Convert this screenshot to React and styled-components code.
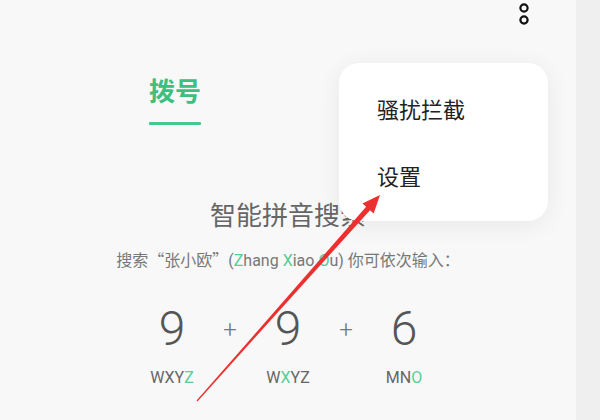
import React from "react";
import styled, { createGlobalStyle } from "styled-components";

const GlobalStyle = createGlobalStyle`
  html, body {
    margin: 0;
    padding: 0;
  }
  body {
    font-family: Roboto, "Noto Sans CJK SC", sans-serif;
    background: #f8f8f8;
  }
  * {
    box-sizing: border-box;
  }
`;

const SPage = styled.div`
  width: 600px;
  height: 420px;
  display: flex;
  position: relative;
  overflow: hidden;
`;

const SMain = styled.div`
  flex: 1;
  position: relative;
  background: #f8f8f8;
  display: flex;
  flex-direction: column;
`;

const SSideStrip = styled.div`
  width: 24px;
  background: #efefef;
`;

const STopBar = styled.div`
  height: 34px;
  display: flex;
  justify-content: flex-end;
  align-items: center;
  padding-right: 46px;
`;

const STabRow = styled.div`
  margin-top: 40px;
  padding-left: 149px;
  display: flex;
`;

const STab = styled.div`
  display: flex;
  flex-direction: column;
  align-items: stretch;
  color: #3dbf80;
  font-family: "Noto Sans CJK SC", sans-serif;
  font-weight: 700;
  font-size: 26px;
  line-height: 31px;

  &::after {
    content: "";
    height: 3px;
    margin-top: 17px;
    background: #46c88c;
    border-radius: 1px;
  }
`;

const SContent = styled.div`
  display: flex;
  flex-direction: column;
  align-items: center;
  margin-top: 74px;
`;

const STitle = styled.div`
  font-family: "Noto Sans CJK SC", sans-serif;
  font-size: 26px;
  line-height: 30px;
  color: #666666;
`;

const SDesc = styled.div`
  margin-top: 19px;
  font-family: Roboto, "Noto Sans CJK SC", sans-serif;
  font-size: 16px;
  line-height: 22px;
  color: #777777;
  white-space: nowrap;
`;

// full-width punctuation comes from the CJK face
const SCjk = styled.span`
  font-family: "Noto Sans CJK SC", sans-serif;
`;

const SHi = styled.span`
  color: ${(p) => (p.$light ? "#52cf98" : "#3dbf80")};
`;

const SKeys = styled.div`
  margin-top: 29px;
  display: grid;
  grid-template-columns: 80px 36px 80px 36px 80px;
  grid-template-rows: 56px 20px;
  row-gap: 11px;
  justify-items: center;
  align-items: center;
`;

const SDigit = styled.div`
  font-family: Roboto, sans-serif;
  font-weight: 300;
  font-size: 48px;
  line-height: 56px;
  color: #555555;
`;

const SPlus = styled.div`
  font-family: Roboto, sans-serif;
  font-weight: 300;
  font-size: 24px;
  line-height: 24px;
  color: #777777;
  margin-top: 2px;
`;

const SLetters = styled.div`
  font-family: Roboto, sans-serif;
  font-size: 16px;
  line-height: 20px;
  color: #666666;
`;

const SMenu = styled.div`
  position: absolute;
  top: 63px;
  right: 28px;
  width: 209px;
  padding: 11px 0 13px;
  background: #ffffff;
  border-radius: 20px;
  box-shadow: 0 4px 24px rgba(0, 0, 0, 0.07);
  z-index: 2;
`;

const SMenuItem = styled.div`
  height: 67px;
  display: flex;
  align-items: center;
  padding-left: 38px;
  font-family: "Noto Sans CJK SC", sans-serif;
  font-size: 22px;
  color: #222222;
`;

const SArrow = styled.svg`
  position: absolute;
  left: 0;
  top: 0;
  width: 600px;
  height: 420px;
  pointer-events: none;
  z-index: 3;
`;

const MoreIcon = () => (
  <svg width="12" height="28" viewBox="0 0 12 28">
    <circle cx="6" cy="5" r="3.6" fill="none" stroke="#111" strokeWidth="2.2" />
    <circle cx="6" cy="17" r="3.6" fill="none" stroke="#111" strokeWidth="2.2" />
  </svg>
);

const keys = [
  { digit: "9", letters: ["WXY", "Z", ""] },
  { digit: "9", letters: ["W", "X", "YZ"] },
  { digit: "6", letters: ["MN", "O", ""] },
];

const App = () => {
  return (
    <SPage>
      <GlobalStyle />
      <SMain>
        <STopBar>
          <MoreIcon />
        </STopBar>
        <STabRow>
          <STab>拨号</STab>
        </STabRow>
        <SContent>
          <STitle>智能拼音搜索</STitle>
          <SDesc>
            搜索<SCjk>“</SCjk>张小欧<SCjk>”</SCjk>(<SHi $light>Z</SHi>hang{" "}
            <SHi $light>X</SHi>iao <SHi $light>O</SHi>u) 你可依次输入<SCjk>：</SCjk>
          </SDesc>
          <SKeys>
            {keys.map((k, i) => (
              <React.Fragment key={"d" + i}>
                {i > 0 && <SPlus>+</SPlus>}
                <SDigit>{k.digit}</SDigit>
              </React.Fragment>
            ))}
            {keys.map((k, i) => (
              <React.Fragment key={"l" + i}>
                {i > 0 && <div />}
                <SLetters>
                  {k.letters[0]}
                  <SHi $light>{k.letters[1]}</SHi>
                  {k.letters[2]}
                </SLetters>
              </React.Fragment>
            ))}
          </SKeys>
        </SContent>
        <SMenu>
          <SMenuItem>骚扰拦截</SMenuItem>
          <SMenuItem>设置</SMenuItem>
        </SMenu>
      </SMain>
      <SSideStrip />
      <SArrow viewBox="0 0 600 420">
        <polygon
          points="197.45,401.4 369.99,210.19 373.66,213.44 380,195 362.44,203.48 366.11,206.73 196.55,400.6"
          fill="#ec3030"
        />
      </SArrow>
    </SPage>
  );
};

export default App;
